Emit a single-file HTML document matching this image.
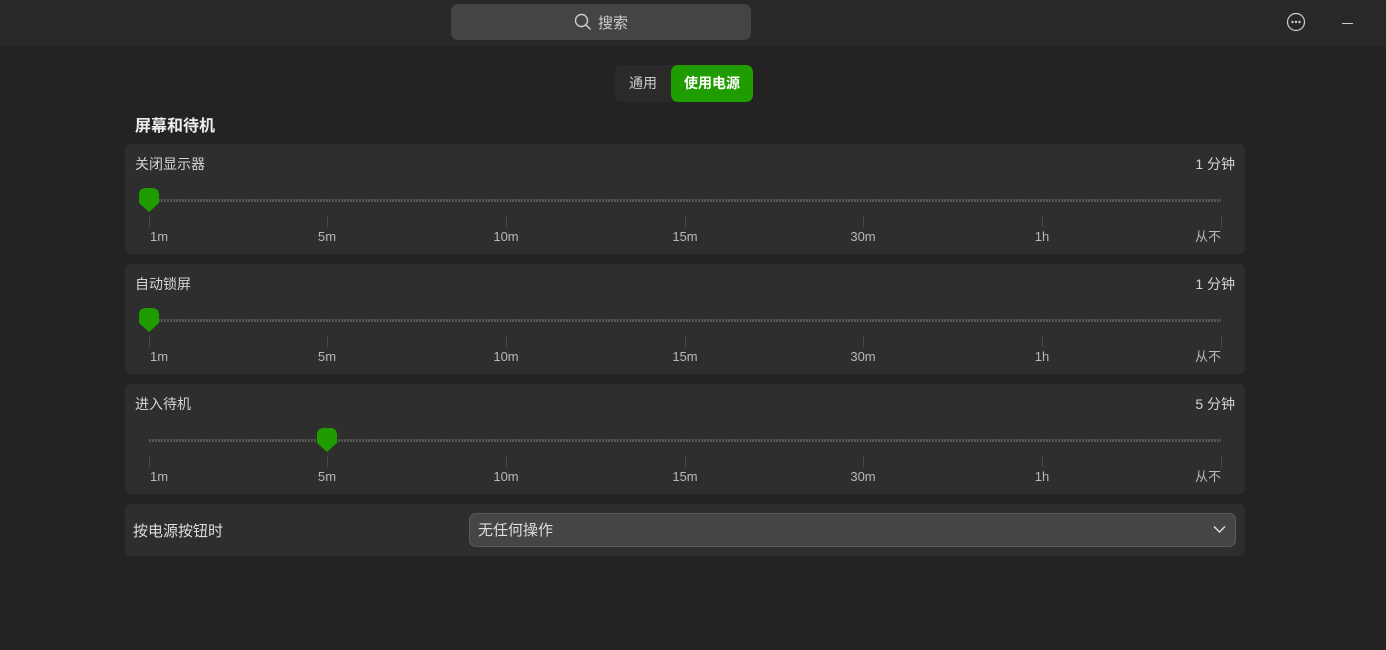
<!DOCTYPE html>
<html><head><meta charset="utf-8"><style>
*{margin:0;padding:0;box-sizing:border-box}
body{width:1386px;height:650px;background:#232323;font-family:"Liberation Sans","Noto Sans CJK SC",sans-serif;color:#ddd;position:relative;overflow:hidden}
.hdr{position:absolute;left:0;top:0;width:1386px;height:46px;background:#282828}
.search{position:absolute;left:451px;top:4px;width:300px;height:36px;background:#444;border-radius:7px;font-size:15px;color:#ccc;display:flex;align-items:center;justify-content:center}
.abs{position:absolute}
.tabs{position:absolute;left:615px;top:65px;width:138px;height:37px;background:#2a2a2a;border-radius:7px}
.tab1{position:absolute;left:0;top:0;width:56px;height:37px;line-height:37px;text-align:center;font-size:14px;color:#ccc}
.tab2{position:absolute;left:56px;top:0;width:82px;height:37px;line-height:37px;text-align:center;font-size:14px;color:#fff;background:#1e9c00;border-radius:7px;font-weight:bold}
.h{position:absolute;left:135px;top:112px;font-size:16px;font-weight:bold;color:#eee}
.panel{position:absolute;left:125px;width:1120px;height:110px;background:#2e2e2e;border-radius:6px}
.lbl{position:absolute;left:10px;top:10px;font-size:14px;color:#d4d4d4}
.val{position:absolute;right:10px;top:10px;font-size:14px;color:#d4d4d4}
.track{position:absolute;left:24px;top:55px;width:1072px;height:3px;background:repeating-linear-gradient(90deg,#555 0 2px,transparent 2px 3px)}
.tick{position:absolute;top:72px;width:1px;height:11px;background:#4a4a4a}
.tl{position:absolute;top:86px;height:14px;line-height:14px;font-size:13px;color:#b8b8b8;transform:translateX(-50%)}
.knob{position:absolute;top:44px;width:20px;height:24px}
</style></head><body>
<div class="hdr"></div>
<div class="search"><svg width="18" height="18" viewBox="0 0 18 18" style="margin-right:6px"><circle cx="7.5" cy="7.5" r="6" fill="none" stroke="#ccc" stroke-width="1.4"/><line x1="12" y1="12" x2="16.5" y2="16.5" stroke="#ccc" stroke-width="1.5"/></svg>搜索</div>
<svg class="abs" style="left:1286px;top:12px" width="20" height="20" viewBox="0 0 20 20"><circle cx="10" cy="10" r="8.5" fill="none" stroke="#ccc" stroke-width="1.2"/><circle cx="6.5" cy="10" r="1.2" fill="#ccc"/><circle cx="10" cy="10" r="1.2" fill="#ccc"/><circle cx="13.5" cy="10" r="1.2" fill="#ccc"/></svg>
<div class="abs" style="left:1342px;top:23px;width:11px;height:1px;background:#ccc"></div>
<div class="tabs"><div class="tab1">通用</div><div class="tab2">使用电源</div></div>
<div class="h">屏幕和待机</div>

<div class="panel" style="top:144px"><div class="lbl">关闭显示器</div><div class="val">1 分钟</div><div class="track"></div>
<div class="tick" style="left:24px"></div><div class="tick" style="left:202px"></div><div class="tick" style="left:381px"></div><div class="tick" style="left:560px"></div><div class="tick" style="left:738px"></div><div class="tick" style="left:917px"></div><div class="tick" style="left:1096px"></div>
<div class="tl" style="left:34px">1m</div><div class="tl" style="left:202px">5m</div><div class="tl" style="left:381px">10m</div><div class="tl" style="left:560px">15m</div><div class="tl" style="left:738px">30m</div><div class="tl" style="left:917px">1h</div><div class="tl" style="left:1083px">从不</div>
<svg class="knob" style="left:14px" viewBox="0 0 20 24"><path d="M0 7Q0 0 7 0H13Q20 0 20 7V15L10 24L0 15Z" fill="#1e9c00"/></svg></div>

<div class="panel" style="top:264px"><div class="lbl">自动锁屏</div><div class="val">1 分钟</div><div class="track"></div>
<div class="tick" style="left:24px"></div><div class="tick" style="left:202px"></div><div class="tick" style="left:381px"></div><div class="tick" style="left:560px"></div><div class="tick" style="left:738px"></div><div class="tick" style="left:917px"></div><div class="tick" style="left:1096px"></div>
<div class="tl" style="left:34px">1m</div><div class="tl" style="left:202px">5m</div><div class="tl" style="left:381px">10m</div><div class="tl" style="left:560px">15m</div><div class="tl" style="left:738px">30m</div><div class="tl" style="left:917px">1h</div><div class="tl" style="left:1083px">从不</div>
<svg class="knob" style="left:14px" viewBox="0 0 20 24"><path d="M0 7Q0 0 7 0H13Q20 0 20 7V15L10 24L0 15Z" fill="#1e9c00"/></svg></div>

<div class="panel" style="top:384px"><div class="lbl">进入待机</div><div class="val">5 分钟</div><div class="track"></div>
<div class="tick" style="left:24px"></div><div class="tick" style="left:202px"></div><div class="tick" style="left:381px"></div><div class="tick" style="left:560px"></div><div class="tick" style="left:738px"></div><div class="tick" style="left:917px"></div><div class="tick" style="left:1096px"></div>
<div class="tl" style="left:34px">1m</div><div class="tl" style="left:202px">5m</div><div class="tl" style="left:381px">10m</div><div class="tl" style="left:560px">15m</div><div class="tl" style="left:738px">30m</div><div class="tl" style="left:917px">1h</div><div class="tl" style="left:1083px">从不</div>
<svg class="knob" style="left:192px" viewBox="0 0 20 24"><path d="M0 7Q0 0 7 0H13Q20 0 20 7V15L10 24L0 15Z" fill="#1e9c00"/></svg></div>

<div class="panel" style="top:504px;height:52px"><div class="abs" style="left:8px;top:16px;font-size:15px;color:#ddd">按电源按钮时</div>
<div class="abs" style="left:344px;top:9px;width:767px;height:34px;background:#454545;border:1px solid #5a5a5a;border-radius:7px;font-size:15px;color:#ddd;line-height:34px;padding-left:8px">无任何操作
<svg class="abs" style="right:9px;top:11px" width="13" height="9" viewBox="0 0 13 9"><path d="M1 1.5L6.5 7L12 1.5" fill="none" stroke="#ddd" stroke-width="1.5"/></svg></div></div>
</body></html>
